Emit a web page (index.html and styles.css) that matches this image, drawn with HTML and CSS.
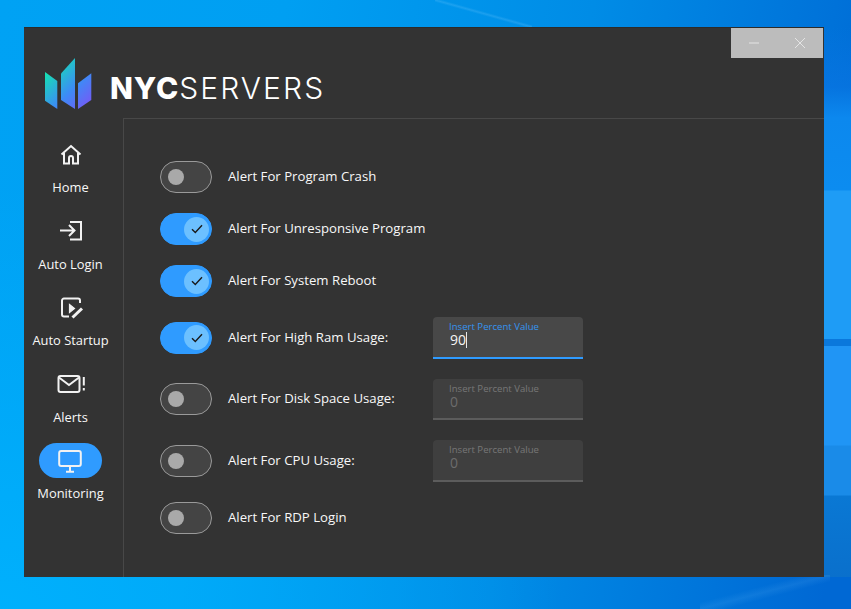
FILE: index.html
```html
<!DOCTYPE html>
<html lang="en">
<head>
<meta charset="utf-8">
<title>NYCServers</title>
<link rel="stylesheet" href="styles.css">
</head>
<body>
<div class="window">
  <div class="controls">
    <span class="ctl-btn"><svg width="12" height="12" viewBox="0 0 12 12"><path d="M1 6H11" class="ctl-line"/></svg></span>
    <span class="ctl-btn"><svg width="12" height="12" viewBox="0 0 12 12"><path d="M1 1L11 11M11 1L1 11" class="ctl-line"/></svg></span>
  </div>
  <header class="brand">
    <svg class="logo" width="48" height="53" viewBox="44 57 48 53">
      <defs>
        <linearGradient id="lg" gradientUnits="userSpaceOnUse" x1="46" y1="70" x2="88" y2="110">
          <stop offset="0" stop-color="#13e6ae"/>
          <stop offset="0.55" stop-color="#3c8cf6"/>
          <stop offset="1" stop-color="#7a55f6"/>
        </linearGradient>
      </defs>
      <polygon fill="url(#lg)" points="45,72 57.3,81 57.3,109 45,100.7"/>
      <polygon fill="url(#lg)" points="61,73.5 75,58 75,109 61,100"/>
      <polygon fill="url(#lg)" points="78,83.3 91.3,73.3 91.3,100 78,109"/>
    </svg>
    <div class="wordmark"><b>NYC</b><span>SERVERS</span></div>
  </header>
  <div class="body">
    <nav class="nav">
      <a class="nav-item">
        <span class="pill"><svg class="ico" width="24" height="24" viewBox="0 0 24 24"><path d="M2.5 11.5L12 3L21.5 11.5M5 10V20.5H10V15A2 2 0 0 1 14 15V20.5H19V10"/></svg></span>
        <span class="nav-label">Home</span>
      </a>
      <a class="nav-item">
        <span class="pill"><svg class="ico" width="24" height="24" viewBox="0 0 24 24"><path d="M1 11.5H15.5M10 6L15.5 11.5L10 17M11 3H22V20.5H11"/></svg></span>
        <span class="nav-label">Auto Login</span>
      </a>
      <a class="nav-item">
        <span class="pill"><svg class="ico" width="24" height="24" viewBox="0 0 24 24"><path d="M21 7V4.5A2 2 0 0 0 19 2.5H5A2 2 0 0 0 3 4.5V18.5A2 2 0 0 0 5 20.5H10"/><path d="M10.5 8.5L15.5 12.5L10.5 16.5Z" class="solid"/><path d="M13.5 21.5L23 12.5" class="thick"/></svg></span>
        <span class="nav-label">Auto Startup</span>
      </a>
      <a class="nav-item">
        <span class="pill"><svg class="ico" width="30" height="24" viewBox="0 0 30 24"><rect x="2.5" y="4" width="21" height="16" rx="2"/><path d="M3 5.5L13 13L23 5.5M27.8 5V13.5M27.8 16V18.5"/></svg></span>
        <span class="nav-label">Alerts</span>
      </a>
      <a class="nav-item active">
        <span class="pill"><svg class="ico" width="24" height="24" viewBox="0 0 24 24"><rect x="1.2" y="2" width="21.6" height="15" rx="2"/><path d="M12 18V22M8 22.8H16"/></svg></span>
        <span class="nav-label">Monitoring</span>
      </a>
    </nav>
    <main class="content">
      <div class="row">
        <span class="toggle"><span class="knob"></span></span>
        <span class="label">Alert For Program Crash</span>
      </div>
      <div class="row">
        <span class="toggle on"><span class="knob"><svg width="12" height="10" viewBox="0 0 12 10"><path d="M1 5.2L4.3 8.5L11 1.3" class="check"/></svg></span></span>
        <span class="label">Alert For Unresponsive Program</span>
      </div>
      <div class="row">
        <span class="toggle on"><span class="knob"><svg width="12" height="10" viewBox="0 0 12 10"><path d="M1 5.2L4.3 8.5L11 1.3" class="check"/></svg></span></span>
        <span class="label">Alert For System Reboot</span>
      </div>
      <div class="row field-row">
        <span class="toggle on"><span class="knob"><svg width="12" height="10" viewBox="0 0 12 10"><path d="M1 5.2L4.3 8.5L11 1.3" class="check"/></svg></span></span>
        <span class="label">Alert For High Ram Usage:</span>
        <div class="field active">
          <span class="field-label">Insert Percent Value</span>
          <span class="field-value">90<i class="caret"></i></span>
        </div>
      </div>
      <div class="row field-row">
        <span class="toggle"><span class="knob"></span></span>
        <span class="label">Alert For Disk Space Usage:</span>
        <div class="field">
          <span class="field-label">Insert Percent Value</span>
          <span class="field-value">0</span>
        </div>
      </div>
      <div class="row field-row">
        <span class="toggle"><span class="knob"></span></span>
        <span class="label">Alert For CPU Usage:</span>
        <div class="field">
          <span class="field-label">Insert Percent Value</span>
          <span class="field-value">0</span>
        </div>
      </div>
      <div class="row">
        <span class="toggle"><span class="knob"></span></span>
        <span class="label">Alert For RDP Login</span>
      </div>
    </main>
  </div>
</div>
</body>
</html>
```
FILE: styles.css
```css
* { box-sizing: border-box; }
html, body { height: 100%; }
body {
  margin: 0;
  padding: 27px 0 0 24px;
  overflow: hidden;
  font-family: "Open Sans", "Noto Sans", sans-serif;
  background-color: #0090e8;
  background-image:
    linear-gradient(to top right, rgba(140,210,255,0) 46%, rgba(140,210,255,0.2) 50%, rgba(140,210,255,0) 54%),
    linear-gradient(to bottom right, rgba(140,210,255,0) 40%, rgba(140,210,255,0.1) 50%, rgba(140,210,255,0) 60%),
    linear-gradient(180deg,
      rgba(0,110,220,0) 0, rgba(10,118,228,0.6) 60px,
      #0c88ee 91px, #0c8cf0 163px,
      #1e9cf6 164px, #1e9cf6 312px,
      #0a78dc 312px, #0a78dc 319px,
      #2095f5 319px, #2095f5 418px,
      #1a8be8 419px, #1a8be8 468px,
      #0a78d4 469px, #0a70cc 550px),
    radial-gradient(560px 420px at 0 100%, rgba(0,180,255,0.8) 0%, rgba(0,180,255,0) 100%),
    linear-gradient(100deg, #00a2f4 0%, #009ff2 30%, #008ce6 62%, #0068d4 97%);
  background-position: 435px 0, 700px 575px, 824px 27px, 0 0, 0 0;
  background-size: 97px 27px, 130px 34px, 27px 550px, 100% 100%, 100% 100%;
  background-repeat: no-repeat;
}
.window {
  position: relative;
  width: 800px;
  height: 550px;
  background: #333333;
  border-top: 1px solid #2b2b2b;
  display: flex;
  flex-direction: column;
}
.controls {
  position: absolute;
  top: 0;
  right: 1px;
  width: 92px;
  height: 30px;
  background: #bcbcbc;
  display: flex;
}
.ctl-btn {
  flex: 1;
  display: flex;
  align-items: center;
  justify-content: center;
}
.ctl-line { stroke: #e4e4e4; stroke-width: 1; fill: none; }
.brand {
  height: 90px;
  padding: 16px 0 0 20px;
  display: flex;
  align-items: center;
  gap: 18px;
  flex: none;
}
.logo { flex: none; margin-top: 4px; }
.wordmark {
  font-family: Inter, "Liberation Sans", sans-serif;
  font-size: 30px;
  line-height: 36px;
  color: #ffffff;
  margin-top: 14px;
}
.wordmark b { font-weight: 800; letter-spacing: 0.9px; }
.wordmark span { font-weight: 300; letter-spacing: 2.1px; }
.body { flex: 1; display: flex; min-height: 0; }
.nav {
  width: 99px;
  flex: none;
  padding: 19px 6px 0 0;
  display: flex;
  flex-direction: column;
  align-items: center;
  gap: 16.5px;
}
.nav-item {
  display: flex;
  flex-direction: column;
  align-items: center;
  gap: 5px;
  height: 60px;
}
.pill {
  width: 63px;
  height: 35px;
  border-radius: 18px;
  display: flex;
  align-items: center;
  justify-content: center;
}
.active .pill { background: #2f9bff; }
.ico { fill: none; stroke: #f2f2f2; stroke-width: 2; }
.ico .solid { stroke-width: 1.2; fill: #f2f2f2; }
.ico .thick { stroke-width: 3; }
.nav-label {
  font-size: 12.9px;
  line-height: 20px;
  color: #f8f8f8;
  white-space: nowrap;
}
.content {
  flex: 1;
  border-top: 1px solid #484848;
  border-left: 1px solid #484848;
  padding: 42px 0 0 36px;
  display: flex;
  flex-direction: column;
  gap: 20px;
}
.row { display: flex; align-items: center; height: 32px; }
.field-row { height: 41.5px; }
.toggle {
  width: 52px;
  height: 32px;
  border-radius: 16px;
  background: #444444;
  border: 1px solid #9a9a9a;
  display: flex;
  align-items: center;
  padding-left: 7px;
  flex: none;
}
.knob {
  width: 16px;
  height: 16px;
  border-radius: 50%;
  background: #a9a9a9;
  display: flex;
  align-items: center;
  justify-content: center;
}
.toggle.on {
  background: #2f9bff;
  border-color: #2f9bff;
  padding-left: 23px;
}
.toggle.on .knob { width: 25px; height: 25px; background: #6cc0ff; }
.check { fill: none; stroke: #1a1a1a; stroke-width: 1.4; }
.label {
  width: 205px;
  margin: -2px 0 0 16px;
  flex: none;
  font-size: 13.2px;
  color: #f8f8f8;
  white-space: nowrap;
}
.field {
  width: 150px;
  height: 100%;
  border-radius: 4px 4px 0 0;
  background: #3f3f3f;
  border-bottom: 2px solid #5c5c5c;
  padding: 4px 0 0 16px;
  display: flex;
  flex-direction: column;
}
.field.active { background: #484848; border-bottom-color: #2f9bff; }
.field-label {
  font-size: 9.6px;
  line-height: 11px;
  color: #777777;
  white-space: nowrap;
}
.active .field-label { color: #3594f0; }
.field-value {
  font-size: 14px;
  line-height: 16px;
  color: #6c6c6c;
  display: flex;
  align-items: center;
  padding-left: 1px;
}
.active .field-value { color: #f5f5f5; }
.caret { width: 1px; height: 16px; background: #e8e8e8; margin-left: 0; }
```
